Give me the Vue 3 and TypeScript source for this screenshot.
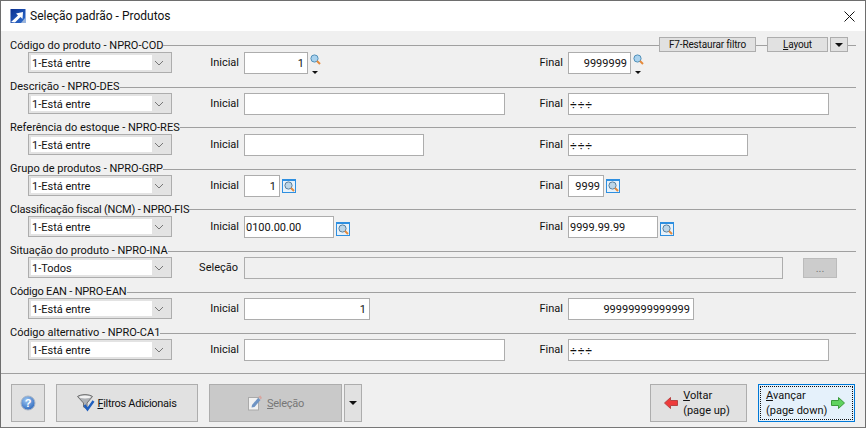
<script setup lang="ts">
interface Field { w: number; v: string; right?: boolean; icon?: 'lens' | 'box' }
interface Row { label: string; select: string; ini?: Field; fin?: Field; sel?: boolean; dip?: boolean; tools?: boolean; tight?: boolean; low?: boolean }
const rows: Row[] = [
  { tools: true, label: 'Código do produto - NPRO-COD', select: '1-Está entre', ini: { w: 64, v: '1', right: true, icon: 'lens' }, fin: { w: 63, v: '9999999', right: true, icon: 'lens' } },
  { dip: true, label: 'Descrição - NPRO-DES', select: '1-Está entre', ini: { w: 261, v: '' }, fin: { w: 261, v: '÷÷÷' } },
  { label: 'Referência do estoque - NPRO-RES', select: '1-Está entre', ini: { w: 180, v: '' }, fin: { w: 180, v: '÷÷÷' } },
  { dip: true, label: 'Grupo de produtos - NPRO-GRP', select: '1-Está entre', ini: { w: 36, v: '1', right: true, icon: 'box' }, fin: { w: 36, v: '9999', right: true, icon: 'box' } },
  { low: true, tight: true, label: 'Classificação fiscal (NCM) - NPRO-FIS', select: '1-Está entre', ini: { w: 90, v: '0100.00.00', icon: 'box' }, fin: { w: 90, v: '9999.99.99', icon: 'box' } },
  { dip: true, label: 'Situação do produto - NPRO-INA', select: '1-Todos', sel: true },
  { dip: true, tight: true, label: 'Código EAN - NPRO-EAN', select: '1-Está entre', ini: { w: 126, v: '1', right: true }, fin: { w: 126, v: '99999999999999', right: true } },
  { dip: true, label: 'Código alternativo - NPRO-CA1', select: '1-Está entre', ini: { w: 261, v: '' }, fin: { w: 261, v: '÷÷÷' } },
]
</script>

<template>
  <div class="win">
    <header class="title">
      <svg class="logo" width="16" height="16" viewBox="0 0 16 16">
        <defs><linearGradient id="lg" x1="0" y1="0" x2="1" y2="1"><stop offset="0" stop-color="#0a2f8f"/><stop offset="1" stop-color="#2f6fd0"/></linearGradient></defs>
        <rect x="0.5" y="1" width="15" height="14" fill="url(#lg)"/>
        <path d="M1 14 L8 7.5 L6 5.5 L13 4 L12.5 11 L10.5 9 L5 14.5 Z" fill="#fff"/>
        <path d="M11 15 L15 10 V15Z" fill="#9db4d8"/>
      </svg>
      <span class="title-text">Seleção padrão - Produtos</span>
      <svg class="close" width="11" height="11" viewBox="0 0 11 11"><path d="M0.5 0.5 L10.5 10.5 M10.5 0.5 L0.5 10.5" stroke="#111" stroke-width="1" fill="none"/></svg>
    </header>

    <main class="body">
      <section v-for="(r, i) in rows" :key="i" class="row">
        <div class="legend">
          <span class="legend-text" :class="{ tight: r.tight }">{{ r.label }}</span>
          <span class="line" :class="{ dip: r.dip }"></span>
          <template v-if="r.tools">
            <button class="tool f7">F7-Restaurar filtro</button>
            <span class="line short"></span>
            <button class="tool layout"><u>L</u>ayout</button>
            <button class="tool drop"><i class="tri"></i></button>
            <span class="line tiny"></span>
          </template>
        </div>
        <div class="fields">
          <div class="select">
            <span class="select-val">{{ r.select }}</span>
            <svg class="chev" width="10" height="6" viewBox="0 0 10 6"><path d="M1 1 L5 5 L9 1" stroke="#777" fill="none"/></svg>
          </div>
          <template v-if="r.sel">
            <label class="lab sel-lab">Seleção</label>
            <div class="sel-cell">
              <div class="input ro"></div>
              <button class="dots">...</button>
            </div>
          </template>
          <template v-else>
            <label class="lab">Inicial</label>
            <div class="cell">
              <div class="input" :class="{ right: r.ini!.right }" :style="{ width: r.ini!.w + 'px' }">{{ r.ini!.v }}</div>
              <div v-if="r.ini!.icon === 'lens'" class="lens-col">
                <svg width="11" height="11" viewBox="0 0 11 11"><circle cx="4.5" cy="4.5" r="3.6" fill="#a9d2ee" stroke="#4f8fb8"/><path d="M7 7 L10 10" stroke="#e58a3a" stroke-width="2"/></svg>
                <i class="tri small"></i>
              </div>
              <div v-if="r.ini!.icon === 'box'" class="lens-box" :class="{ low: r.low }">
                <svg width="11" height="11" viewBox="0 0 11 11"><circle cx="4.5" cy="4.5" r="3.6" fill="#bcd6e8" stroke="#5a7f9c"/><path d="M7 7 L10 10" stroke="#e58a3a" stroke-width="2"/></svg>
              </div>
            </div>
            <label class="lab">Final</label>
            <div class="cell">
              <div class="input" :class="{ right: r.fin!.right, div: r.fin!.v === '÷÷÷' }" :style="{ width: r.fin!.w + 'px' }">{{ r.fin!.v }}</div>
              <div v-if="r.fin!.icon === 'lens'" class="lens-col">
                <svg width="11" height="11" viewBox="0 0 11 11"><circle cx="4.5" cy="4.5" r="3.6" fill="#a9d2ee" stroke="#4f8fb8"/><path d="M7 7 L10 10" stroke="#e58a3a" stroke-width="2"/></svg>
                <i class="tri small"></i>
              </div>
              <div v-if="r.fin!.icon === 'box'" class="lens-box" :class="{ low: r.low }">
                <svg width="11" height="11" viewBox="0 0 11 11"><circle cx="4.5" cy="4.5" r="3.6" fill="#bcd6e8" stroke="#5a7f9c"/><path d="M7 7 L10 10" stroke="#e58a3a" stroke-width="2"/></svg>
              </div>
            </div>
          </template>
        </div>
      </section>
    </main>

    <footer class="foot">
      <button class="btn help" aria-label="Ajuda">
        <svg width="16" height="16" viewBox="0 0 16 16">
          <defs><radialGradient id="hg" cx="0.4" cy="0.3" r="0.8"><stop offset="0" stop-color="#9cc6f2"/><stop offset="1" stop-color="#2360b8"/></radialGradient></defs>
          <circle cx="8" cy="8" r="7" fill="url(#hg)" stroke="#a8b4c4"/>
          <text x="8" y="12" text-anchor="middle" class="q">?</text>
        </svg>
      </button>
      <button class="btn filt">
        <svg width="18" height="18" viewBox="0 0 18 18">
          <path d="M0.5 2.5 C4 0 12 0 15.5 2.5 L10 9 V15 L6.5 13 V9 Z" fill="#aeb1b5" stroke="#6f6f6f"/>
          <ellipse cx="8" cy="3" rx="6" ry="1.4" fill="#f2f2f2"/>
          <path d="M7.5 11 L10.5 15.5 L16.5 7" stroke="#1f5fbf" stroke-width="2.4" fill="none"/>
        </svg>
        <span class="ft"><u>F</u>iltros Adicionais</span>
      </button>
      <button class="btn seln">
        <svg width="16" height="16" viewBox="0 0 16 16">
          <rect x="1.5" y="2.5" width="10" height="12.5" fill="#f2f2f2" stroke="#aaa"/>
          <path d="M5 10 L11 3 L13.5 5 L7.5 12 L4.5 12.5 Z" fill="#6f94c4"/>
          <path d="M11.5 1.5 L13.5 0.5 L15 3 L13.5 4.5 Z" fill="#d8a6a0"/>
        </svg>
        <span class="dis ft"><u>S</u>eleção</span>
      </button>
      <button class="btn seld"><i class="tri"></i></button>
      <span class="spacer"></span>
      <button class="btn nav back">
        <svg width="14" height="12" viewBox="0 0 14 12"><path d="M0.5 6 L6.5 0.5 V3.5 H13.5 V8.5 H6.5 V11.5 Z" fill="#ee3b3b" stroke="#b54545"/></svg>
        <span class="two"><span><u>V</u>oltar</span><span>(page up)</span></span>
      </button>
      <button class="btn nav next">
        <span class="focus">
          <span class="two"><span><u>A</u>vançar</span><span>(page down)</span></span>
          <svg width="14" height="12" viewBox="0 0 14 12"><path d="M13.5 6 L7.5 0.5 V3.5 H0.5 V8.5 H7.5 V11.5 Z" fill="#5fd35f" stroke="#3c9a3c"/></svg>
        </span>
      </button>
    </footer>
  </div>
</template>

<style>
html, body { margin: 0; padding: 0; background: #f0f0f0; }
</style>

<style scoped>
.win {
  width: 866px; height: 428px; box-sizing: border-box; display: flex; flex-direction: column;
  border: 1px solid #6e6e6e; border-bottom-color: #777;
  font-family: Roboto, "Noto Sans", sans-serif; font-size: 11px; color: #111; background: #f0f0f0;
  overflow: hidden;
}
.title { height: 30px; flex: none; background: #fff; display: flex; align-items: center; padding: 0 10px 0 9px; }
.logo { margin-right: 4px; }
.title-text { flex: 1; font-size: 12px; }
.body { flex: none; height: 343px; box-sizing: border-box; padding: 7px 9px 0 9px; border-bottom: 1px solid #a0a0a0; }
.row { height: 41px; }
.legend { height: 14px; display: flex; align-items: flex-start; line-height: 16px; }
.legend-text { white-space: nowrap; }
.legend-text.tight { letter-spacing: -0.2px; }
.line { flex: 1; height: 1px; background: #a0a0a0; margin-top: 7px; }
.line.dip { margin-top: 8px; }
.line.short { flex: none; width: 11px; }
.line.tiny { flex: none; width: 8px; }
.tool { height: 15px; margin-top: -1px; box-sizing: border-box; border: 1px solid #adadad; background: #e1e1e1; font: inherit; font-size: 10px; letter-spacing: -0.15px; padding: 0; color: #111; display: flex; align-items: center; justify-content: center; }
.f7 { width: 97px; }
.layout { width: 61px; margin-right: 2px; }
.drop { width: 18px; }
.tri { display: block; width: 0; height: 0; border-left: 4px solid transparent; border-right: 4px solid transparent; border-top: 4px solid #111; }
.tri.small { border-left-width: 3px; border-right-width: 3px; border-top-width: 3px; margin-left: 2px; }
.fields { display: grid; grid-template-columns: 144px 72px 292px 32px 1fr; margin-left: 18px; height: 22px; align-items: start; }
.select { height: 21px; box-sizing: border-box; border: 1px solid #adadad; background: #e3e3e3; padding: 2px; display: flex; align-items: center; justify-content: space-between; }
.select-val { background: #fff; width: 121px; height: 15px; line-height: 17px; padding-left: 1px; box-sizing: border-box; }
.chev { margin-right: 5px; }
.lab { text-align: right; padding-right: 5px; line-height: 22px; }
.sel-lab { padding-right: 6px; }
.cell { display: flex; gap: 2px; }
.sel-cell { grid-column: span 3; display: flex; align-items: flex-start; }
.input { height: 22px; box-sizing: border-box; border: 1px solid #adadad; background: #fff; line-height: 22px; padding: 0 3px 0 1px; white-space: nowrap; overflow: hidden; }
.input.right { text-align: right; }
.input.div { font-size: 12px; letter-spacing: 0.8px; }
.input.ro { width: 539px; background: #f0f0f0; }
.dots { width: 34px; height: 20px; margin: 1px 0 0 20px; background: #ccc; border: 1px solid #bbb; color: #777; font: inherit; padding: 0; }
.lens-col { display: flex; flex-direction: column; justify-content: space-between; height: 22px; width: 12px; padding-top: 2px; box-sizing: border-box; }
.lens-box { width: 14px; height: 14px; margin-top: 4px; box-sizing: border-box; border: 1px solid #2e8fe0; border-top-width: 2px; background: #e8f2fa; display: flex; align-items: center; justify-content: center; }
.lens-box.low { margin-top: 6px; }
.foot { flex: 1; display: flex; align-items: flex-start; padding: 10px 10px 0 10px; }
.btn { height: 38px; box-sizing: border-box; border: 1px solid #adadad; background: #e1e1e1; font: inherit; color: #111; padding: 0; display: flex; align-items: center; justify-content: center; }
.help { width: 34px; margin-right: 11px; }
.q { font: bold 11px "Liberation Sans", sans-serif; fill: #fff; }
.ft { letter-spacing: -0.3px; }
.filt { width: 142px; gap: 2px; margin-right: 11px; }
.seln { width: 133px; gap: 4px; background: #c9c9c9; margin-right: 2px; }
.dis { color: #777; }
.seld { width: 18px; }
.spacer { flex: 1; }
.nav { width: 97px; text-align: left; line-height: 15px; white-space: nowrap; }
.back { gap: 5px; margin-right: 11px; padding-right: 3px; }
.two { display: flex; flex-direction: column; }
.next { background: #e5f1fb; border-color: #0078d7; padding: 1px; }
.focus { width: 100%; height: 100%; box-sizing: border-box; border: 1px dotted #111; display: flex; align-items: center; justify-content: space-between; padding: 0 7px 0 5px; }
</style>
